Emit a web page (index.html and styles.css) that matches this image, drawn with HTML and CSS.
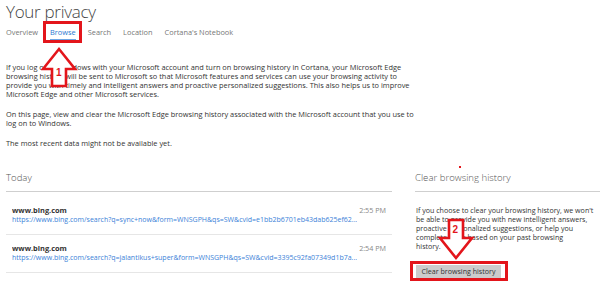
FILE: index.html
```html
<!DOCTYPE html>
<html lang="en">
<head>
<meta charset="utf-8">
<title>Your privacy</title>
<link rel="stylesheet" href="styles.css">
</head>
<body>
<div class="page">
  <h1 class="title">Your privacy</h1>
  <nav class="tabs">
    <span class="tab">Overview</span>
    <span class="tab active">Browse<span class="mark mark-tab"></span></span>
    <span class="tab">Search</span>
    <span class="tab">Location</span>
    <span class="tab">Cortana's Notebook</span>
  </nav>

  <section class="intro">
    <p>If you log on to Windows with your Microsoft account and turn on browsing history in Cortana, your Microsoft Edge<br>browsing history will be sent to Microsoft so that Microsoft features and services can use your browsing activity to<br>provide you with timely and intelligent answers and proactive personalized suggestions. This also helps us to improve<br>Microsoft Edge and other Microsoft services.</p>
    <p>On this page, view and clear the Microsoft Edge browsing history associated with the Microsoft account that you use to<br>log on to Windows.</p>
    <p>The most recent data might not be available yet.</p>
  </section>

  <div class="columns">
    <section class="history">
      <h2 class="heading">Today</h2>
      <ul class="list">
        <li class="item">
          <div class="item-main">
            <div class="site">www.bing.com</div>
            <div class="url">https://www.bing.com/search?q=sync+now&amp;form=WNSGPH&amp;qs=SW&amp;cvid=e1bb2b6701eb43dab625ef62...</div>
          </div>
          <div class="time">2:55 PM</div>
        </li>
        <li class="item">
          <div class="item-main">
            <div class="site">www.bing.com</div>
            <div class="url">https://www.bing.com/search?q=jalantikus+super&amp;form=WNSGPH&amp;qs=SW&amp;cvid=3395c92fa07349d1b7a...</div>
          </div>
          <div class="time">2:54 PM</div>
        </li>
      </ul>
    </section>

    <aside class="clear">
      <span class="dot"></span>
      <h2 class="heading">Clear browsing history</h2>
      <p class="clear-text">If you choose to clear your browsing history, we won't<br>be able to provide you with new intelligent answers,<br>proactive personalized suggestions, or help you<br>complete tasks based on your past browsing<br>history.</p>
      <div class="btn-wrap">
        <button class="btn">Clear browsing history</button>
        <span class="mark mark-btn"></span>
      </div>
    </aside>
  </div>

  <svg class="arrow arrow-up" width="40" height="44" viewBox="0 0 40 44">
    <polygon points="11,40 11,23 2,23 18,3 34,23 25,23 25,40" fill="#fff" stroke="#e3151b" stroke-width="2.6" stroke-linejoin="miter"/>
    <text x="15" y="30" class="arrow-num">1</text>
  </svg>

  <svg class="arrow arrow-down" width="40" height="44" viewBox="0 0 40 44">
    <polygon points="14,2 28,2 28,20 37,20 21,40 5,20 14,20" fill="#fff" stroke="#e3151b" stroke-width="2.6" stroke-linejoin="miter"/>
    <text x="17.5" y="15" class="arrow-num">2</text>
  </svg>
</div>
</body>
</html>
```

FILE: styles.css
```css
* { box-sizing: border-box; }
html, body { margin: 0; padding: 0; background: #fff; }
body {
  font-family: "Open Sans", "Noto Sans", sans-serif;
  color: #333;
  width: 600px;
  height: 284px;
  overflow: hidden;
}
.page {
  position: relative;
  padding: 0 0 0 6px;
}
.title {
  margin: 0;
  font-size: 17px;
  font-weight: 300;
  line-height: 24px;
  color: #444;
  letter-spacing: -0.3px;
}
.tabs {
  display: flex;
  gap: 12px;
  margin-top: 1px;
  font-size: 7.4px;
  line-height: 14px;
  color: #777;
}
.tab {
  position: relative;
  border-bottom: 2px solid transparent;
}
.tab.active {
  color: #2a78d0;
  border-bottom-color: #6ea6e4;
}
.mark {
  position: absolute;
  border: 3px solid #e3151b;
}
.mark-tab {
  left: -7px;
  right: -6px;
  top: -4px;
  bottom: -4px;
}
.intro {
  margin-top: 22px;
  width: 390px;
  font-size: 7.4px;
  line-height: 9px;
  color: #333;
}
.intro p { margin: 0 0 11px 0; white-space: nowrap; }
.intro p:last-child { margin-bottom: 0; }

.columns {
  display: flex;
  gap: 23px;
  margin-top: 23px;
}
.history { flex: 0 0 386px; width: 386px; }
.clear { flex: 1 1 auto; min-width: 0; position: relative; }
.heading {
  margin: 0;
  font-size: 9.6px;
  font-weight: 300;
  line-height: 14px;
  color: #555;
  padding-bottom: 6px;
  border-bottom: 1px solid #cfcfcf;
}
.list {
  list-style: none;
  margin: 5px 0 0 0;
  padding: 0;
}
.item {
  display: flex;
  justify-content: space-between;
  padding: 8px 6px 9px 6px;
  border-bottom: 1px solid #e6e6e6;
}
.item-main { min-width: 0; overflow: hidden; }
.site {
  font-size: 7.4px;
  font-weight: 700;
  line-height: 10px;
  color: #333;
}
.url {
  font-size: 7px;
  line-height: 10px;
  color: #3b82d8;
  white-space: nowrap;
}
.time {
  flex: 0 0 auto;
  white-space: nowrap;
  font-size: 7.2px;
  line-height: 10px;
  color: #888;
}
.dot {
  position: absolute;
  left: 44px;
  top: -5px;
  width: 2px;
  height: 2px;
  background: #e3151b;
}
.clear-text {
  margin: 13.5px 0 0 1px;
  font-size: 7.1px;
  line-height: 9px;
  color: #333;
  white-space: nowrap;
}
.btn-wrap {
  position: relative;
  display: inline-block;
  margin-top: 14px;
  margin-left: 1px;
}
.btn {
  display: block;
  width: 85px;
  height: 13px;
  padding: 0;
  border: none;
  background: #cccccc;
  color: #333;
  font-family: "Open Sans", "Noto Sans", sans-serif;
  font-size: 7.1px;
  line-height: 13px;
}
.mark-btn {
  left: -6px;
  right: -7px;
  top: -4px;
  bottom: -3px;
}
.arrow {
  position: absolute;
}
.arrow-up { left: 41px; top: 46px; }
.arrow-down { left: 435px; top: 218px; }
.arrow-num {
  font-family: "Liberation Sans", sans-serif;
  font-size: 10px;
  font-weight: 700;
  fill: #e3151b;
}
```
